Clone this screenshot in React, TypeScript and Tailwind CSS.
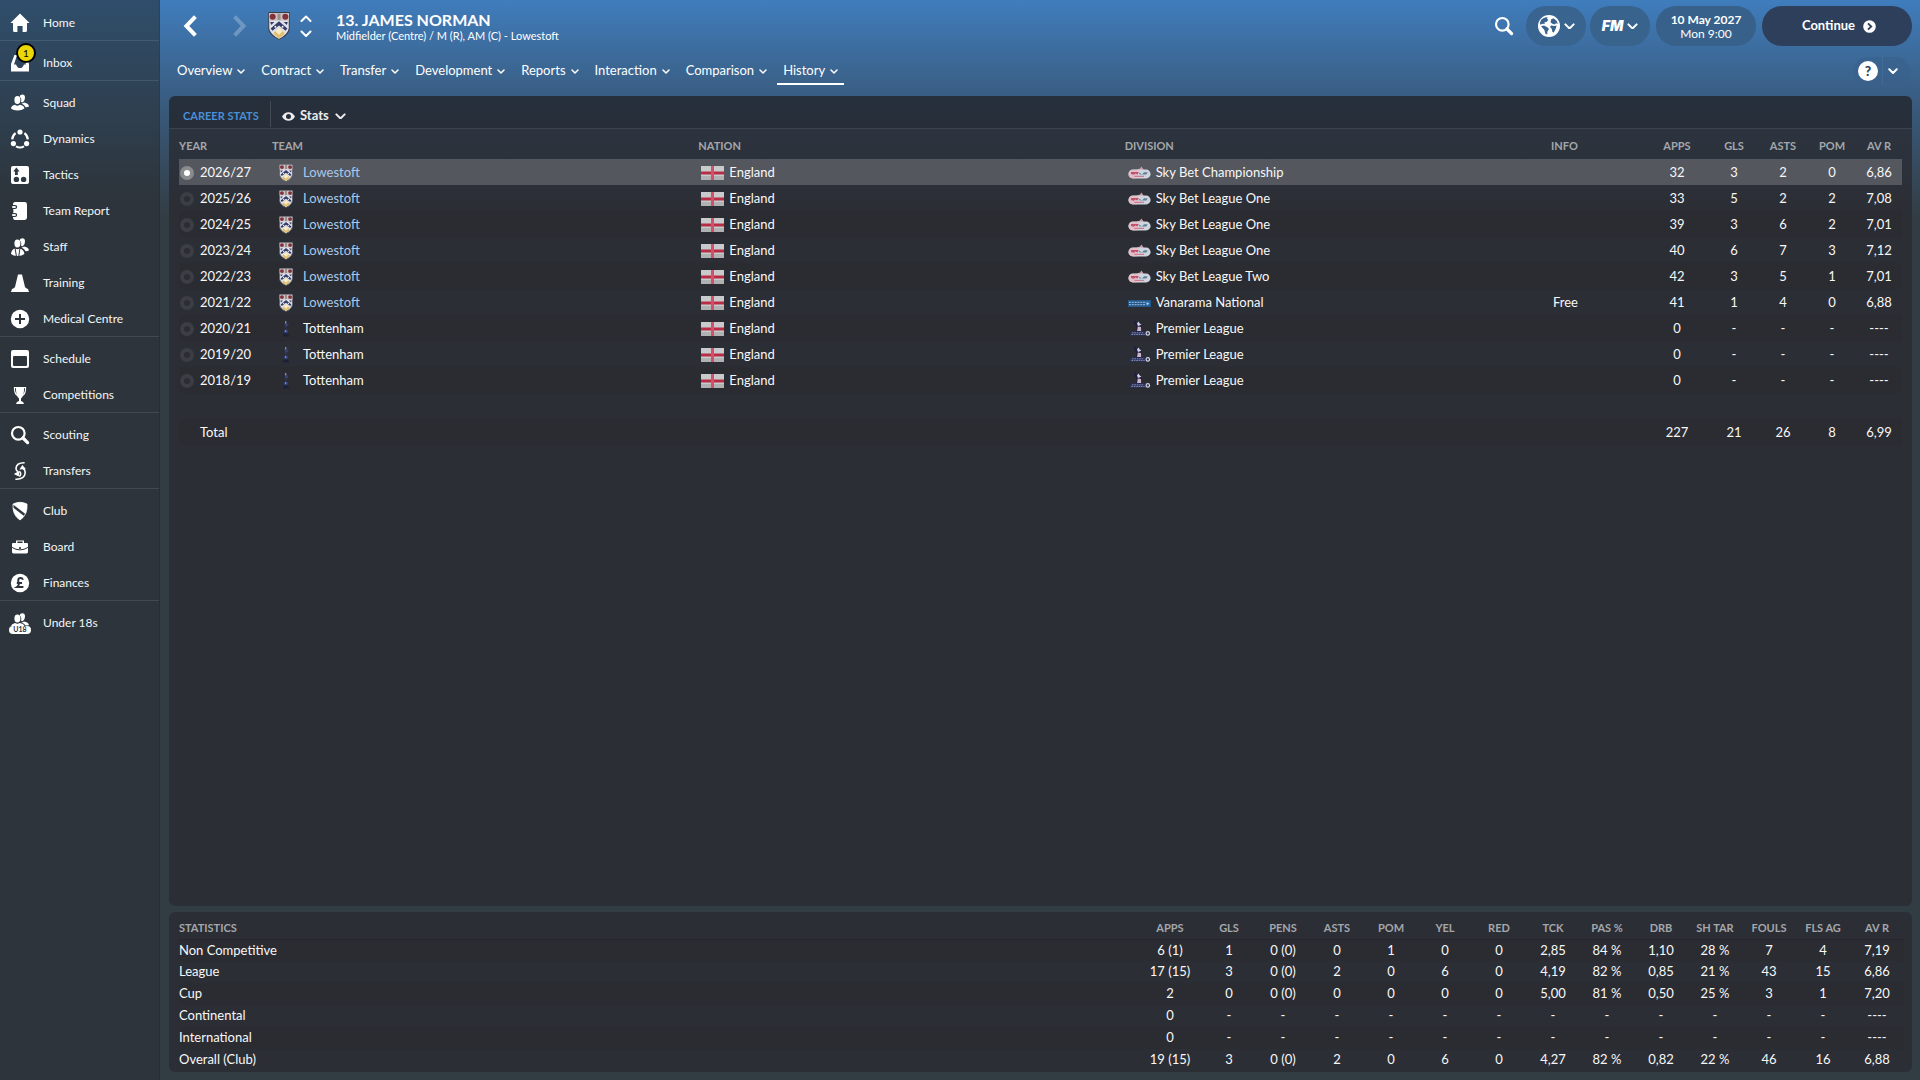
import React from "react";

type Icon = () => React.ReactElement;

const HomeIcon: Icon = () => (
  <svg width="20" height="20" viewBox="0 0 20 20" fill="currentColor" aria-hidden="true">
    <path d="M10 0.6 L19.6 10 L17 10 V17.4 Q17 19 15.4 19 H12.6 V13 H7.4 V19 H4.6 Q3 19 3 17.4 V10 H0.4 Z" />
  </svg>
);
const InboxIcon: Icon = () => (
  <svg width="20" height="20" viewBox="0 0 20 20" fill="currentColor" aria-hidden="true">
    <path fillRule="evenodd" d="M4.4 2 H15.6 L19 11 V18.6 H1 V11 Z M6.4 4 L4 11.4 H6 Q7.4 15 10 15 Q12.6 15 14 11.4 H16 L13.6 4 Z" />
  </svg>
);
const SquadIcon: Icon = () => (
  <svg width="20" height="20" viewBox="0 0 20 20" fill="currentColor" aria-hidden="true">
    <ellipse cx="7.4" cy="7" rx="3" ry="4" />
    <path d="M9.6 3.4 Q10 1.4 12.4 1.4 Q15 1.4 15 4.6 Q15 8 13 9.2 Q11.6 9.6 11 8.8 Q12 5.6 9.6 3.4 Z" />
    <path d="M1 15.4 Q1.4 12.4 5 11.8 Q7.4 13.6 9.8 11.8 Q14 12.4 14.4 15.4 Q12 17.4 7.6 17.4 Q3 17.4 1 15.4 Z" />
    <path d="M11.4 10.6 Q13 10.6 14 9.6 Q18.4 10.2 19 13.4 Q17.6 14.4 15.6 14.2 Q14.4 11.6 11.4 10.6 Z" />
  </svg>
);
const DynamicsIcon: Icon = () => (
  <svg width="20" height="20" viewBox="0 0 20 20" fill="none" stroke="currentColor" strokeWidth="2.2" aria-hidden="true">
    <path d="M14.4 4.2 Q17.4 6.4 17.8 10.4 M5.6 4.2 Q2.6 6.4 2.2 10.4 M6 17.4 Q10 19.6 14 17.4" />
    <g fill="currentColor" stroke="none">
      <circle cx="10" cy="3" r="2.6" />
      <circle cx="3.4" cy="14.6" r="2.6" />
      <circle cx="16.6" cy="14.6" r="2.6" />
    </g>
  </svg>
);
const TacticsIcon: Icon = () => (
  <svg width="20" height="20" viewBox="0 0 20 20" aria-hidden="true">
    <rect x="1" y="1" width="18" height="18" rx="2" fill="currentColor" />
    <path d="M6.4 2.6 L9.6 6.4 H7.8 V10 H5 V6.4 H3.2 Z" fill="#2d3a45" />
    <circle cx="6.4" cy="14.4" r="2.7" fill="#2d3a45" />
    <circle cx="13.6" cy="14.4" r="2.7" fill="#2d3a45" />
  </svg>
);
const ReportIcon: Icon = () => (
  <svg width="20" height="20" viewBox="0 0 20 20" aria-hidden="true">
    <path d="M5 1 H14.6 Q17 1 17 3.4 V16.6 Q17 19 14.6 19 H5 Q3.4 19 3 17 V3 Q3.4 1 5 1 Z" fill="currentColor" />
    <path d="M2 4.6 H5 Q6.6 4.6 6.6 6 Q6.6 7.4 5 7.4 H2 M2 12.6 H5 Q6.6 12.6 6.6 14 Q6.6 15.4 5 15.4 H2" fill="none" stroke="#2d363e" strokeWidth="1.1" />
    <path d="M2 6 H5 M2 14 H5" stroke="currentColor" strokeWidth="1.3" />
    <path d="M1.4 8.4 H3.4 V11.6 H1.4 Z" fill="#2d363e" />
  </svg>
);
const StaffIcon: Icon = () => (
  <svg width="20" height="20" viewBox="0 0 20 20" aria-hidden="true">
    <g fill="currentColor">
      <ellipse cx="7.4" cy="6.6" rx="3" ry="4" />
      <path d="M9.6 3.2 Q10 1.2 12.4 1.2 Q15 1.2 15 4.4 Q15 7.8 13 9 Q11.6 9.4 11 8.6 Q12 5.4 9.6 3.2 Z" />
      <path d="M1 17 Q1.2 12.4 5 11.4 Q7.4 13 9.8 11.4 Q14 12.4 14.4 17 Q12 19 7.6 19 Q3 19 1 17 Z" />
      <path d="M11.4 10.4 Q13 10.4 14 9.4 Q18.4 10 19 13.2 Q17.6 14.4 15.6 14.2 Q14.4 11.4 11.4 10.4 Z" />
    </g>
    <path d="M5 11 L6.4 19 M10 11 L8.8 19" stroke="#2d353c" strokeWidth="1" />
  </svg>
);
const TrainingIcon: Icon = () => (
  <svg width="20" height="20" viewBox="0 0 20 20" fill="currentColor" aria-hidden="true">
    <path d="M8 1.6 H12 L15 14 Q16 15.4 18 16 L19 19 H1 L2 16 Q4 15.4 5 14 Z" />
  </svg>
);
const MedicalIcon: Icon = () => (
  <svg width="20" height="20" viewBox="0 0 20 20" aria-hidden="true">
    <circle cx="10" cy="10" r="9.2" fill="currentColor" />
    <path d="M10 5 V15 M5 10 H15" stroke="#2d343b" strokeWidth="2" />
  </svg>
);
const ScheduleIcon: Icon = () => (
  <svg width="20" height="20" viewBox="0 0 20 20" fill="currentColor" aria-hidden="true">
    <path fillRule="evenodd" d="M3 1 H17 Q19 1 19 3 V17 Q19 19 17 19 H3 Q1 19 1 17 V3 Q1 1 3 1 Z M4 7 Q3 7 3 8 V16 Q3 17 4 17 H16 Q17 17 17 16 V8 Q17 7 16 7 Z" />
  </svg>
);
const CupIcon: Icon = () => (
  <svg width="20" height="20" viewBox="0 0 20 20" fill="currentColor" aria-hidden="true">
    <path d="M6 2 H14 Q14.4 11 11 13.4 L11 16 Q13.6 16.4 14 19 H6 Q6.4 16.4 9 16 V13.4 Q5.6 11 6 2 Z" />
    <path d="M6.4 2.6 H4.4 Q4.2 8.6 7.4 10.6 M13.6 2.6 H15.6 Q15.8 8.6 12.6 10.6" fill="none" stroke="currentColor" strokeWidth="1.1" />
  </svg>
);
const SearchIcon: Icon = () => (
  <svg width="20" height="20" viewBox="0 0 20 20" fill="none" stroke="currentColor" aria-hidden="true">
    <circle cx="8.3" cy="8.3" r="6.3" strokeWidth="2.2" />
    <path d="M13 13 L17.6 17.6" strokeWidth="3.2" strokeLinecap="round" />
  </svg>
);
const TransfersIcon: Icon = () => (
  <svg width="20" height="20" viewBox="0 0 20 20" aria-hidden="true">
    <path d="M14.6 1.8 Q6.4 1.6 6 7.4 Q6 9.6 8 10.4 M5.4 18.2 Q15 18.6 15.2 11.4 Q15.2 8.6 13 7.6 M9.4 10.4 Q12 12.6 9.4 15.6" fill="none" stroke="currentColor" strokeWidth="1.6" />
    <path d="M9.4 8.6 L15.8 8 L12.4 4 Z M3.8 13 L9.4 9.8 L8.8 15.4 Z" fill="currentColor" />
  </svg>
);
const ClubIcon: Icon = () => (
  <svg width="20" height="20" viewBox="0 0 20 20" aria-hidden="true">
    <path d="M3 3 Q10 -0.4 17 3 Q17.8 14 10 19 Q2.2 14 3 3 Z" fill="currentColor" />
    <path d="M2.6 4.6 L16 15" stroke="#2d343b" strokeWidth="2.4" />
    <path d="M3 3 Q10 -0.4 17 3 Q17.8 14 10 19 Q2.2 14 3 3 Z" fill="none" stroke="currentColor" strokeWidth="0.8" />
  </svg>
);
const BoardIcon: Icon = () => (
  <svg width="20" height="20" viewBox="0 0 20 20" aria-hidden="true">
    <path fillRule="evenodd" fill="currentColor" d="M6 3.4 H14 V6 H17 Q18 6 18 7 V15 Q18 16.4 16.6 16.4 H3.4 Q2 16.4 2 15 V7 Q2 6 3 6 H6 Z M7.4 4.6 V6 H12.6 V4.6 Z" />
    <path d="M2 10.4 Q10 15.4 18 10.4" fill="none" stroke="#2d343b" strokeWidth="1" />
    <circle cx="10" cy="11" r="1.1" fill="#2d343b" />
  </svg>
);
const FinancesIcon: Icon = () => (
  <svg width="20" height="20" viewBox="0 0 20 20" aria-hidden="true">
    <circle cx="10" cy="10" r="9.2" fill="currentColor" />
    <path d="M13 6.8 Q12.4 5 10.6 5 Q8.2 5 8.2 7.4 Q8.2 8.6 8.8 10 Q9.2 12.6 7 14 H13.4 M6.8 10 H12" fill="none" stroke="#2d343b" strokeWidth="1.9" />
  </svg>
);
const YouthIcon: Icon = () => (
  <span className="flex flex-col items-center">
    <svg width="20" height="13" viewBox="0 1 20 13" fill="currentColor" aria-hidden="true">
      <ellipse cx="7.4" cy="6.6" rx="3" ry="4" />
      <path d="M9.6 3.2 Q10 1.2 12.4 1.2 Q15 1.2 15 4.4 Q15 7.8 13 9 Q11.6 9.4 11 8.6 Q12 5.4 9.6 3.2 Z" />
      <path d="M1 14 Q1.6 11.8 5 11 Q7.4 12.4 9.8 11 Q14 12 14.4 14 Z M11.4 10.4 Q13 10.4 14 9.4 Q18.4 10 19 13.2 L15.6 13.4 Q14.4 11.4 11.4 10.4 Z" />
    </svg>
    <span className="flex h-2 w-[22px] items-center justify-center rounded-full bg-white text-[7px] leading-none font-bold text-[#2d343b]">
      U18
    </span>
  </span>
);

const Chevron = ({ size = 8, up = false, weight = 2 }: { size?: number; up?: boolean; weight?: number }) => (
  <svg width={size} height={size * 0.625} viewBox="0 0 16 10" fill="none" stroke="currentColor" aria-hidden="true" className="shrink-0">
    <path d={up ? "M2 8 L8 2 L14 8" : "M2 2 L8 8 L14 2"} strokeWidth={(weight * 16) / size} strokeLinecap="round" strokeLinejoin="round" />
  </svg>
);

const Crest = ({ width, height }: { width: number; height: number }) => (
  <svg width={width} height={height} viewBox="0 0 21 27" aria-hidden="true" className="shrink-0">
    <path d="M0.6 0.6 H20.4 V16 Q19.6 22 10.5 26.4 Q1.4 22 0.6 16 Z" fill="#e2e3e8" stroke="#3b3f4a" strokeWidth="1" />
    <path d="M1 1 H20 V8.4 H1 Z" fill="#c9c4c8" />
    <circle cx="4.4" cy="4.6" r="2.9" fill="#843038" />
    <circle cx="16.6" cy="4.6" r="2.9" fill="#843038" />
    <path d="M9 1.6 H12 V7.6 H9 Z" fill="#9a8f8c" />
    <path d="M10.5 9 L18.6 15.8 L16.8 18 L10.5 13 L4.2 18 L2.4 15.8 Z" fill="#343c6c" />
    <path d="M2 9.6 L6 9.6 L3 12.6 Z M19 9.6 L15 9.6 L18 12.6 Z" fill="#343c6c" />
    <circle cx="7" cy="14.2" r="0.9" fill="#fff" />
    <circle cx="14" cy="14.2" r="0.9" fill="#fff" />
    <path d="M10.5 15 L16 20.6 Q14 23.6 10.5 25.6 Q7 23.6 5 20.6 Z" fill="#e3bf6d" />
    <path d="M10.5 15 L14 18.6 L10.5 22 L7 18.6 Z" fill="#f6ecc9" />
  </svg>
);
const Cockerel: Icon = () => (
  <svg width="14" height="18" viewBox="0 0 14 18" aria-hidden="true" className="shrink-0">
    <path d="M6.4 1 L7.2 1 L7.4 4 L9.6 3 L9 5.6 L7.4 7 L7.2 10 H6.8 L6.6 6.6 L5.6 5 Z" fill="#36416f" />
    <path d="M6.4 1 H7.2 V3.6 H6.4 Z" fill="#b9c0dc" />
    <circle cx="7" cy="11.4" r="2" fill="#34427c" />
    <circle cx="6.6" cy="11" r="0.8" fill="#98a4d2" />
    <path d="M5 13.4 H9 L10.4 16.6 H3.6 Z" fill="#1d2138" />
  </svg>
);
const Flag: Icon = () => (
  <svg width="23" height="14" viewBox="0 0 23 14" aria-hidden="true" className="shrink-0">
    <rect width="23" height="14" fill="#c9cacb" />
    <rect y="10" width="23" height="4" fill="#b0b1b3" />
    <path d="M0 5.5 H23 V8.5 H0 Z" fill="#b82c46" />
    <path d="M10 0 H13 V14 H10 Z" fill="#d2506a" />
  </svg>
);
const SkyBetLogo: Icon = () => (
  <svg width="23" height="14" viewBox="0 0 23 14" aria-hidden="true" className="shrink-0">
    <path d="M9 3.4 L12 2.6 L13.4 0.6 L15.6 3.4 L15 5 H9 Z" fill="#c99dac" />
    <rect x="0.4" y="3.6" width="22.2" height="8.8" rx="4.4" fill="#cfd4de" />
    <path d="M0.6 8 Q1 3.8 5 3.8 L11 3.8 L9 12.2 H5 Q0.8 12.2 0.6 8 Z" fill="#e0bfc8" />
    <path d="M3 6 H10.6 L9.6 8.4 L7.4 7.4 L6 8.8 L3 8 Z" fill="#c4506a" />
    <path d="M10.6 6.2 L14 8.4 L16 6.2 H19.6 L18.4 8.6 H11.6 Z" fill="#5d8299" />
    <path d="M6.4 10.4 H16" stroke="#cf7b90" strokeWidth="1.1" />
  </svg>
);
const VanaramaLogo: Icon = () => (
  <svg width="23" height="14" viewBox="0 0 23 14" aria-hidden="true" className="shrink-0">
    <rect y="4" width="23" height="7" fill="#24588c" />
    <path d="M1 6.4 H18 M1 8.6 H17" stroke="#86add0" strokeWidth="1.1" strokeDasharray="2 0.8" />
    <circle cx="19.6" cy="7.4" r="2.2" fill="#3b7dba" />
    <path d="M18.6 6.4 L21 7.6 L19 9" fill="#c3dcef" />
  </svg>
);
const PremierLogo: Icon = () => (
  <svg width="23" height="18" viewBox="0 0 23 18" aria-hidden="true" className="shrink-0">
    <path d="M6 0.6 L8.4 1.6 L9.4 4.6 L13.6 5 L13.6 12 H8 L8.6 7 L6.6 4 Z" fill="#1d1e40" />
    <path d="M9 3.4 L10.4 1.4 L11.6 3.2 L13.4 4.8 L10 6 Z" fill="#d4d1e4" />
    <path d="M9.8 6.6 L13 7 L13.2 11 H9 Z" fill="#cdb3c6" />
    <path d="M3 11.4 H17 L19 15.6 H1.4 Z" fill="#2b3360" />
    <path d="M4 12.8 H16 M3.4 14.5 H16.6" stroke="#8a90ae" strokeWidth="0.9" strokeDasharray="1.6 0.8" />
    <circle cx="19.8" cy="13.4" r="2.3" fill="#d4d5e0" />
    <circle cx="19.8" cy="13.4" r="1.1" fill="#2a2d45" />
  </svg>
);

const menu: { label: string; icon: Icon; badge?: string }[][] = [
  [{ label: "Home", icon: HomeIcon }],
  [{ label: "Inbox", icon: InboxIcon, badge: "1" }],
  [
    { label: "Squad", icon: SquadIcon },
    { label: "Dynamics", icon: DynamicsIcon },
    { label: "Tactics", icon: TacticsIcon },
    { label: "Team Report", icon: ReportIcon },
    { label: "Staff", icon: StaffIcon },
    { label: "Training", icon: TrainingIcon },
    { label: "Medical Centre", icon: MedicalIcon },
  ],
  [
    { label: "Schedule", icon: ScheduleIcon },
    { label: "Competitions", icon: CupIcon },
  ],
  [
    { label: "Scouting", icon: SearchIcon },
    { label: "Transfers", icon: TransfersIcon },
  ],
  [
    { label: "Club", icon: ClubIcon },
    { label: "Board", icon: BoardIcon },
    { label: "Finances", icon: FinancesIcon },
  ],
  [{ label: "Under 18s", icon: YouthIcon }],
];

const tabs = ["Overview", "Contract", "Transfer", "Development", "Reports", "Interaction", "Comparison", "History"];

const none = ["0", "-", "-", "-", "----"];
const seasons: { year: string; team: string; division: string; logo: Icon; info?: string; values: string[] }[] = [
  { year: "2026/27", team: "Lowestoft", division: "Sky Bet Championship", logo: SkyBetLogo, values: ["32", "3", "2", "0", "6,86"] },
  { year: "2025/26", team: "Lowestoft", division: "Sky Bet League One", logo: SkyBetLogo, values: ["33", "5", "2", "2", "7,08"] },
  { year: "2024/25", team: "Lowestoft", division: "Sky Bet League One", logo: SkyBetLogo, values: ["39", "3", "6", "2", "7,01"] },
  { year: "2023/24", team: "Lowestoft", division: "Sky Bet League One", logo: SkyBetLogo, values: ["40", "6", "7", "3", "7,12"] },
  { year: "2022/23", team: "Lowestoft", division: "Sky Bet League Two", logo: SkyBetLogo, values: ["42", "3", "5", "1", "7,01"] },
  { year: "2021/22", team: "Lowestoft", division: "Vanarama National", logo: VanaramaLogo, info: "Free", values: ["41", "1", "4", "0", "6,88"] },
  { year: "2020/21", team: "Tottenham", division: "Premier League", logo: PremierLogo, values: none },
  { year: "2019/20", team: "Tottenham", division: "Premier League", logo: PremierLogo, values: none },
  { year: "2018/19", team: "Tottenham", division: "Premier League", logo: PremierLogo, values: none },
];

const statHeads = ["APPS", "GLS", "PENS", "ASTS", "POM", "YEL", "RED", "TCK", "PAS %", "DRB", "SH TAR", "FOULS", "FLS AG", "AV R"];
const blank = ["0", "-", "-", "-", "-", "-", "-", "-", "-", "-", "-", "-", "-", "----"];
const stats: { name: string; values: string[] }[] = [
  { name: "Non Competitive", values: ["6 (1)", "1", "0 (0)", "0", "1", "0", "0", "2,85", "84 %", "1,10", "28 %", "7", "4", "7,19"] },
  { name: "League", values: ["17 (15)", "3", "0 (0)", "2", "0", "6", "0", "4,19", "82 %", "0,85", "21 %", "43", "15", "6,86"] },
  { name: "Cup", values: ["2", "0", "0 (0)", "0", "0", "0", "0", "5,00", "81 %", "0,50", "25 %", "3", "1", "7,20"] },
  { name: "Continental", values: blank },
  { name: "International", values: blank },
  { name: "Overall (Club)", values: ["19 (15)", "3", "0 (0)", "2", "0", "6", "0", "4,27", "82 %", "0,82", "22 %", "46", "16", "6,88"] },
];

function Sidebar() {
  return (
    <nav aria-label="Main" className="w-40 shrink-0 border-r border-black/10 bg-linear-to-b from-[#2f4e6b] from-0% to-[#2d343b] to-[200px] text-xs text-[#f4f6f7]">
      {menu.map((group, g) => (
        <ul key={group[0].label} className={g === 0 ? "pt-1" : "border-t border-white/10 pt-[3px]"}>
          {group.map(({ label, icon: ItemIcon, badge }) => (
            <li key={label}>
              <a href="#" className="flex h-9 items-center pt-0.5">
                <span className="relative ml-2 flex w-6 justify-center text-white">
                  <ItemIcon />
                  {badge && (
                    <span className="absolute -top-2.5 left-2 flex size-5 items-center justify-center rounded-full border-2 border-black bg-[#ecd704] text-[10px] leading-none text-black">
                      {badge}
                    </span>
                  )}
                </span>
                <span className="ml-[11px]">{label}</span>
              </a>
            </li>
          ))}
        </ul>
      ))}
    </nav>
  );
}

function Header() {
  return (
    <header className="pr-2 pb-1.5 text-white">
      <div className="flex h-[52px] items-center">
        <button aria-label="Back" className="ml-[22px] flex w-4 justify-center">
          <svg width="14" height="22" viewBox="0 0 14 22" fill="none" stroke="currentColor" strokeWidth="4"><path d="M12.4 1.6 L3.4 11 L12.4 20.4" /></svg>
        </button>
        <button aria-label="Forward" className="ml-[34px] flex w-4 justify-center text-white/25">
          <svg width="14" height="22" viewBox="0 0 14 22" fill="none" stroke="currentColor" strokeWidth="4"><path d="M1.6 1.6 L10.6 11 L1.6 20.4" /></svg>
        </button>
        <span className="ml-5"><Crest width={22} height={28} /></span>
        <div className="ml-2.5 flex flex-col gap-2">
          <button aria-label="Previous player"><Chevron size={12} up /></button>
          <button aria-label="Next player"><Chevron size={12} /></button>
        </div>
        <div className="ml-6 flex flex-col pt-0.5">
          <h1 className="text-base leading-[18px] font-bold">13. JAMES NORMAN</h1>
          <p className="text-[11px] leading-[14px]">Midfielder (Centre) / M (R), AM (C) - Lowestoft</p>
        </div>
        <button aria-label="Search" className="mr-3 ml-auto"><SearchIcon /></button>
        <button aria-label="World" className="mr-1 flex h-10 w-[60px] items-center justify-center gap-1 rounded-full bg-[#38648f]">
          <svg width="22" height="22" viewBox="0 0 22 22" aria-hidden="true">
            <circle cx="11" cy="11" r="11" fill="#fff" />
            <path d="M3.4 4.6 Q6 2 9.6 2 L9 3.8 L10.4 5 L8.4 7 L6.4 7.2 L6.8 9 L4.4 8.8 L2.2 9.8 L2 7.6 Z M3 11.2 L6 10.6 L9.6 12.4 L11 14 L9.4 16.6 L9.2 19.6 L7.4 18.8 L6.4 15 Z M13 4.4 L15.6 3.2 L18.8 6 L19.8 9 L18 8.2 L16.4 9.6 L14.4 8.8 L12.6 7.4 Z M13 10.4 L16.4 11 L18.6 10.4 L17.8 13.4 L15.8 17.4 L14.4 17 L13.8 14 L12 12 Z" fill="#38648f" />
          </svg>
          <Chevron size={11} />
        </button>
        <button aria-label="FM menu" className="mr-1.5 flex h-10 w-[60px] items-center justify-center gap-1 rounded-full bg-[#38638d]">
          <span className="font-[Inter] text-sm leading-none font-black italic">FM</span>
          <Chevron size={11} />
        </button>
        <button className="mr-1.5 flex h-10 w-[100px] flex-col items-center justify-center rounded-full bg-[#37618a] pt-0.5 text-xs leading-[14px]">
          <span className="font-bold">10 May 2027</span>
          <span>Mon 9:00</span>
        </button>
        <button className="flex h-10 w-[150px] items-center justify-center gap-2 rounded-full bg-[#2e3f5c] pl-1 text-[13px] font-bold">
          Continue
          <svg width="13" height="13" viewBox="0 0 13 13" aria-hidden="true">
            <circle cx="6.5" cy="6.5" r="6.3" fill="#fff" />
            <path d="M5 3.4 L8.2 6.5 L5 9.6" fill="none" stroke="#2e3f5c" strokeWidth="1.9" />
          </svg>
        </button>
      </div>
      <div className="flex h-[38px] items-center justify-between">
        <nav aria-label="Player" className="ml-[11px] flex gap-1 text-[13px]">
          {tabs.map((tab) => (
            <button
              key={tab}
              className={
                tab === "History"
                  ? "flex h-7 items-center gap-[5px] border-b-2 border-white px-1.5 pt-0.5"
                  : "flex h-7 items-center gap-[5px] border-b-2 border-transparent px-1.5 pt-0.5"
              }
            >
              {tab}
              <Chevron weight={1.5} />
            </button>
          ))}
        </nav>
        <div className="mr-0.5 flex h-7 w-[57px] items-center rounded-full bg-[#38618a]/60">
          <button aria-label="Help" className="ml-[5px] flex size-5 items-center justify-center rounded-full bg-white text-sm leading-none font-black text-[#2c4460]">?</button>
          <button aria-label="Help menu" className="ml-1 flex h-full w-5 items-center justify-center border-l border-white/5"><Chevron size={10} /></button>
        </div>
      </div>
    </header>
  );
}

function CareerStats() {
  return (
    <section className="flex-1 overflow-hidden rounded-md bg-linear-to-b from-[#2b3643] from-0% to-[#2c2e35] to-[110px]">
      <div className="flex h-[33px] items-center border-b border-[#3a434e] bg-black/10 pt-1">
        <h2 className="ml-3.5 w-[87px] pt-1 text-[11px] font-bold text-[#4a90d6]">CAREER STATS</h2>
        <button className="flex h-[26px] items-center border-l border-[#444b55] pt-1 pl-[11px] text-[13px] font-bold text-[#ececee]">
          <svg width="13" height="9" viewBox="0 0 13 9" aria-hidden="true">
            <path fillRule="evenodd" fill="currentColor" d="M0 4.5 Q2.4 0.2 6.5 0.2 Q10.6 0.2 13 4.5 Q10.6 8.8 6.5 8.8 Q2.4 8.8 0 4.5 Z M6.5 2 A2.5 2.5 0 1 0 6.5 7 A2.5 2.5 0 1 0 6.5 2 Z" />
          </svg>
          <span className="mr-1.5 ml-[5px]">Stats</span>
          <Chevron size={11} />
        </button>
      </div>
      <div className="px-2.5">
        <table className="w-full table-fixed text-[13px] text-[#f8f8f9]">
          <colgroup>
            <col className="w-[93px]" />
            <col />
            <col />
            <col />
            <col className="w-[93px]" />
            <col className="w-[66px]" />
            <col className="w-12" />
            <col className="w-[50px]" />
            <col className="w-12" />
            <col className="w-[46px]" />
          </colgroup>
          <thead>
            <tr className="h-[30px] text-left text-[11px] text-[#a3a7ab] [&>th]:pt-1">
              <th>YEAR</th>
              <th>TEAM</th>
              <th>NATION</th>
              <th>DIVISION</th>
              <th>INFO</th>
              {["APPS", "GLS", "ASTS", "POM", "AV R"].map((h) => (
                <th key={h} className="text-center">{h}</th>
              ))}
            </tr>
          </thead>
          <tbody className="[&_td]:pt-0.5">
            {seasons.map(({ year, team, division, logo: Logo, info, values }, i) => (
              <tr key={year} className={i === 0 ? "h-[26px] bg-[#54575e]" : "h-[26px] odd:bg-black/4"}>
                <td>
                  <label className="flex items-center gap-1.5">
                    <input
                      type="radio"
                      name="season"
                      defaultChecked={i === 0}
                      className="ml-px size-3.5 appearance-none rounded-full border-4 border-[#3b3e44] bg-[#2b2d33] checked:border-[#898b8f] checked:bg-white"
                    />
                    {year}
                  </label>
                </td>
                <td>
                  <a href="#" className={team === "Lowestoft" ? "flex items-center gap-2.5 pl-[7px] text-[#a6c9ec]" : "flex items-center gap-2.5 pl-[7px]"}>
                    {team === "Lowestoft" ? <Crest width={14} height={18} /> : <Cockerel />}
                    {team}
                  </a>
                </td>
                <td>
                  <span className="flex items-center gap-[5px] pl-[3px]"><Flag />England</span>
                </td>
                <td>
                  <a href="#" className="flex items-center gap-[5px] pl-[3px]"><Logo />{division}</a>
                </td>
                <td className="pl-0.5">{info}</td>
                {values.map((v, c) => (
                  <td key={c} className="text-center">{v}</td>
                ))}
              </tr>
            ))}
            <tr className="h-[26px]"><td colSpan={10} /></tr>
            <tr className="h-[26px] odd:bg-black/4">
              <td className="pl-[21px]">Total</td>
              <td colSpan={4} />
              {["227", "21", "26", "8", "6,99"].map((v) => (
                <td key={v} className="text-center">{v}</td>
              ))}
            </tr>
          </tbody>
        </table>
      </div>
    </section>
  );
}

function Statistics() {
  return (
    <section className="rounded-md bg-[#2c2e35] pt-1 pr-2 pb-px pl-2.5">
      <table className="w-full table-fixed text-[13px] text-[#f8f8f9]">
        <colgroup>
          <col />
          <col className="w-16" />
          {statHeads.slice(1).map((h) => (
            <col key={h} className="w-[54px]" />
          ))}
        </colgroup>
        <thead>
          <tr className="h-[23px] border-b border-[#26282e] text-left text-[11px] text-[#a3a7ab] [&>th]:pt-0.5">
            <th>STATISTICS</th>
            {statHeads.map((h) => (
              <th key={h} className="text-center">{h}</th>
            ))}
          </tr>
        </thead>
        <tbody>
          {stats.map(({ name, values }) => (
            <tr key={name} className="h-[22px] odd:bg-black/4">
              <td>{name}</td>
              {values.map((v, c) => (
                <td key={c} className="text-center">{v}</td>
              ))}
            </tr>
          ))}
        </tbody>
      </table>
    </section>
  );
}

export default function App() {
  return (
    <div className="flex min-h-screen bg-[#323c43] bg-linear-to-b from-[#3f7dbd] from-0% via-[#395c80] via-[100px] to-[#323c43] to-[220px] font-[Lato,sans-serif]">
      <Sidebar />
      <div className="flex min-w-0 flex-1 flex-col">
        <Header />
        <main className="flex flex-1 flex-col gap-1.5 pr-2 pb-2 pl-[9px]">
          <CareerStats />
          <Statistics />
        </main>
      </div>
    </div>
  );
}
